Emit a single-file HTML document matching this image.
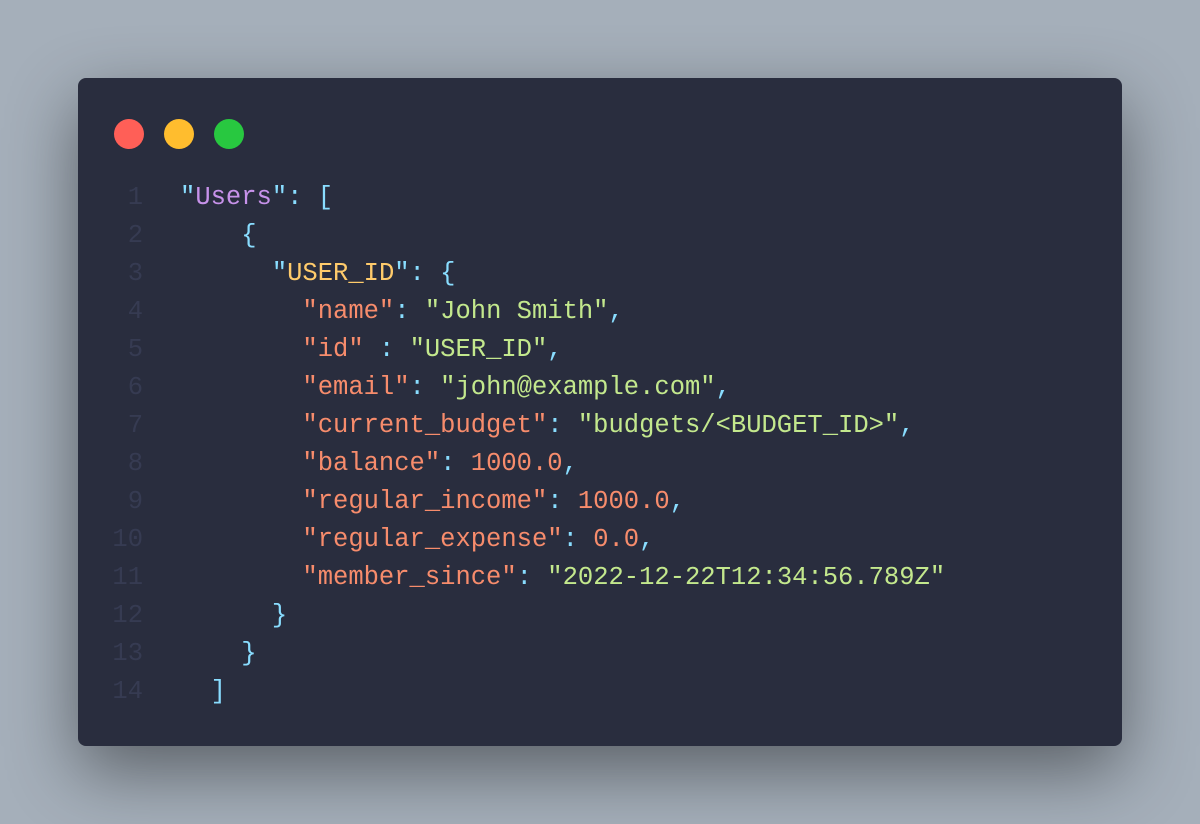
<!DOCTYPE html>
<html><head><meta charset="utf-8"><style>
html,body{margin:0;padding:0}
body{width:1200px;height:824px;background:#a5afba;position:relative;overflow:hidden;font-family:"Liberation Mono",monospace}
.card{position:absolute;left:78px;top:78px;width:1044px;height:668px;background:#292d3e;border-radius:8px;box-shadow:0 25px 70px rgba(0,0,0,.45)}
.dot{position:absolute;top:41px;width:30px;height:30px;border-radius:50%}
.code{position:absolute;left:0;top:101px;font-size:25.5px;line-height:38px;white-space:pre;color:#89ddff}
.ln{display:inline-block;width:65px;text-align:right;color:#363b52;margin-right:37px}
.p{color:#c792ea}.y{color:#ffcb6b}.k{color:#f78c6c}.g{color:#c3e88d}.n{color:#f78c6c}
</style></head><body>
<div class="card">
<div class="dot" style="left:36px;background:#ff5f57"></div>
<div class="dot" style="left:86px;background:#ffbd2e"></div>
<div class="dot" style="left:136px;background:#28c840"></div>
<div class="code"><span class="ln">1</span>"<span class="p">Users</span>": [
<span class="ln">2</span>    {
<span class="ln">3</span>      "<span class="y">USER_ID</span>": {
<span class="ln">4</span>        <span class="k">"name"</span>: <span class="g">"John Smith"</span>,
<span class="ln">5</span>        <span class="k">"id"</span> : <span class="g">"USER_ID"</span>,
<span class="ln">6</span>        <span class="k">"email"</span>: <span class="g">"john@example.com"</span>,
<span class="ln">7</span>        <span class="k">"current_budget"</span>: <span class="g">"budgets/&lt;BUDGET_ID&gt;"</span>,
<span class="ln">8</span>        <span class="k">"balance"</span>: <span class="n">1000.0</span>,
<span class="ln">9</span>        <span class="k">"regular_income"</span>: <span class="n">1000.0</span>,
<span class="ln">10</span>        <span class="k">"regular_expense"</span>: <span class="n">0.0</span>,
<span class="ln">11</span>        <span class="k">"member_since"</span>: <span class="g">"2022-12-22T12:34:56.789Z"</span>
<span class="ln">12</span>      }
<span class="ln">13</span>    }
<span class="ln">14</span>  ]</div>
</div>
</body></html>
